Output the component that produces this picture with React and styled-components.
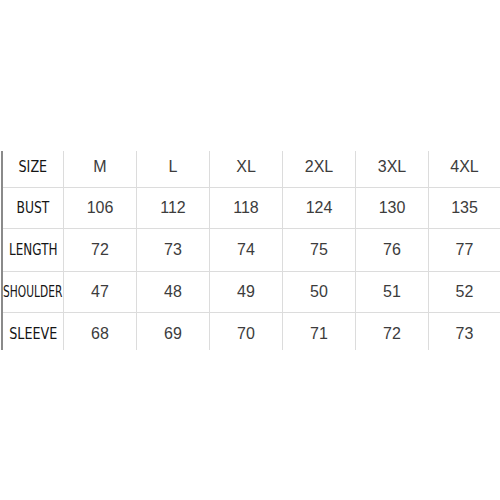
import React from 'react'
import styled, { createGlobalStyle } from 'styled-components'

const GlobalStyle = createGlobalStyle`
  html, body {
    margin: 0;
    padding: 0;
    background: #ffffff;
  }
`

const Page = styled('div')`
  width: 500px;
  height: 500px;
  padding-top: 151px;
  padding-left: 1px;
  box-sizing: border-box;
  background: #fff;
`

const Table = styled('div')`
  display: grid;
  grid-template-columns: 61px repeat(5, 73px) 72px;
  border-left: 2px solid #8a8a8a;
  width: max-content;
`

const Cell = styled('div')`
  height: ${p => p.h}px;
  box-sizing: border-box;
  display: flex;
  align-items: center;
  justify-content: center;
  padding-top: ${p => p.shift > 0 ? p.shift * 2 : 0}px;
  padding-bottom: ${p => p.shift < 0 ? -p.shift * 2 : 0}px;
  border-right: 1px solid #dcdcdc;
  border-bottom: ${p => p.last ? 'none' : '1px solid #dcdcdc'};
  white-space: nowrap;
`

const Label = styled('span')`
  font-family: 'DejaVu Sans', sans-serif;
  font-size: 15px;
  color: #151515;
  display: inline-block;
  transform: scaleX(${p => p.squeeze || 0.85});
`

const Value = styled('span')`
  font-family: 'Liberation Sans', Arial, sans-serif;
  font-size: 16px;
  color: #3c3c3c;
`

const rows = [
  { label: 'SIZE', values: ['M', 'L', 'XL', '2XL', '3XL', '4XL'], h: 37, shift: -2 },
  { label: 'BUST', values: ['106', '112', '118', '124', '130', '135'], h: 41, shift: 0, squeeze: 0.82 },
  { label: 'LENGTH', values: ['72', '73', '74', '75', '76', '77'], h: 43, shift: 0, squeeze: 0.8 },
  { label: 'SHOULDER', values: ['47', '48', '49', '50', '51', '52'], h: 41, shift: 0, squeeze: 0.71 },
  { label: 'SLEEVE', values: ['68', '69', '70', '71', '72', '73'], h: 37, shift: 2 },
]

const App = () => (
  <>
    <GlobalStyle />
    <Page>
      <Table>
        {rows.map((row, i) => {
          const last = i === rows.length - 1
          return (
            <React.Fragment key={row.label}>
              <Cell h={row.h} shift={row.shift} last={last}>
                <Label squeeze={row.squeeze}>{row.label}</Label>
              </Cell>
              {row.values.map((v, j) => (
                <Cell key={j} h={row.h} shift={row.shift} last={last}>
                  <Value>{v}</Value>
                </Cell>
              ))}
            </React.Fragment>
          )
        })}
      </Table>
    </Page>
  </>
)

export default App
